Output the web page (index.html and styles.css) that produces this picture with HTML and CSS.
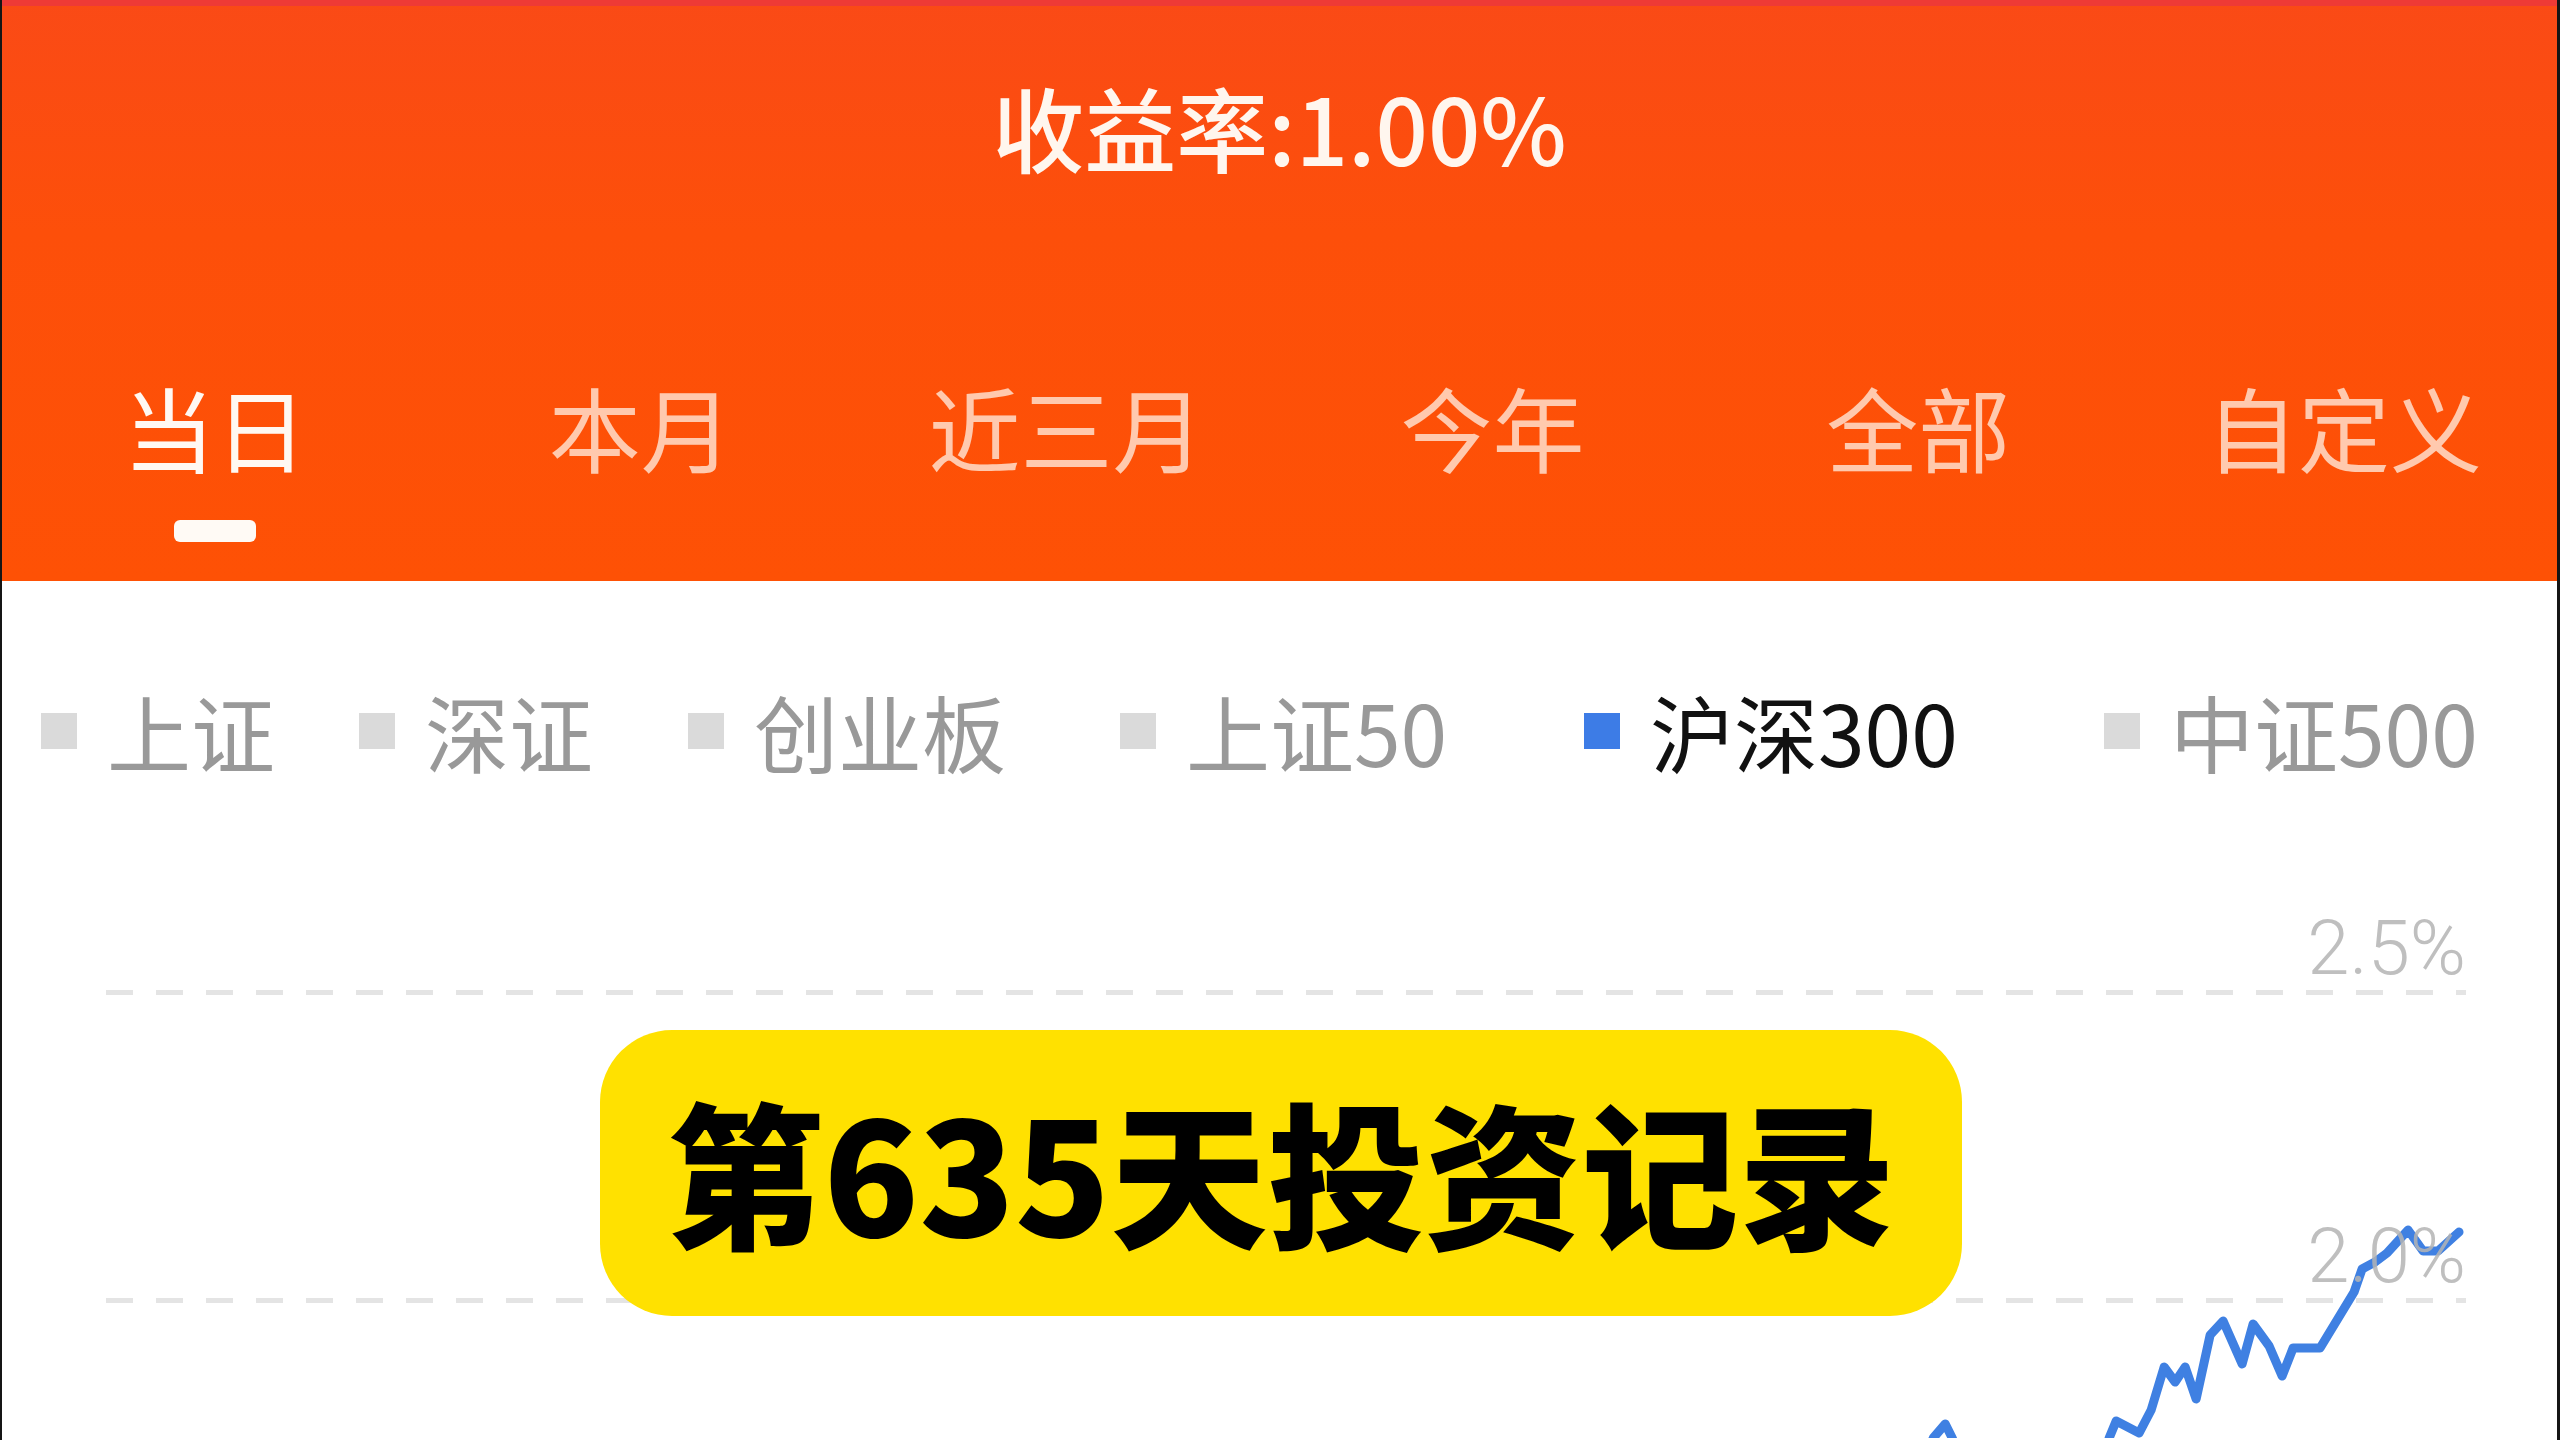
FILE: index.html
```html
<!DOCTYPE html>
<html lang="zh-CN">
<head>
<meta charset="utf-8">
<title>收益率</title>
<link rel="stylesheet" href="styles.css">
</head>
<body>
<div class="screen">
  <header class="header">
    <div class="strip"></div>
    <h1 class="title">收益率:1.00%</h1>
    <nav class="tabs">
      <div class="tab active">当日</div>
      <div class="tab">本月</div>
      <div class="tab">近三月</div>
      <div class="tab">今年</div>
      <div class="tab">全部</div>
      <div class="tab">自定义</div>
    </nav>
  </header>

  <section class="legend">
    <div class="legend-item"><span class="sq"></span><span class="lbl">上证</span></div>
    <div class="legend-item"><span class="sq"></span><span class="lbl">深证</span></div>
    <div class="legend-item"><span class="sq"></span><span class="lbl">创业板</span></div>
    <div class="legend-item"><span class="sq"></span><span class="lbl">上证50</span></div>
    <div class="legend-item on"><span class="sq"></span><span class="lbl">沪深300</span></div>
    <div class="legend-item"><span class="sq"></span><span class="lbl">中证500</span></div>
  </section>

  <section class="chart">
    <svg class="plot" viewBox="2 775 2556 665" preserveAspectRatio="none" aria-hidden="true">
      <polyline fill="none" stroke="#3f80e2" stroke-width="9" stroke-linejoin="round" stroke-linecap="round"
        points="1915,1490 1934,1440 1946,1426 1953,1440 1972,1490 2095,1490 2110,1440 2117,1423 2140,1435 2152,1412 2165,1369 2176,1384 2186,1369 2197,1401 2211,1337 2224,1323 2243,1366 2254,1326 2270,1348 2283,1378 2294,1350 2321,1350 2355,1294 2363,1271 2376,1264 2388,1255 2409,1232 2424,1253 2439,1253 2460,1234"/>
    </svg>
    <div class="grid">
      <div class="glabel">2.5%</div>
      <div class="gline"></div>
      <div class="glabel second">2.0%</div>
      <div class="gline"></div>
    </div>
  </section>

  <div class="badge">第635天投资记录</div>
</div>
</body>
</html>
```

FILE: styles.css
```css
html, body {
  margin: 0;
  padding: 0;
  background: #ffffff;
}

body {
  width: 2560px;
  height: 1440px;
  overflow: hidden;
  font-family: "Noto Sans CJK SC", "Noto Sans", sans-serif;
}

.screen {
  position: relative;
  width: 2560px;
  height: 1440px;
  box-sizing: border-box;
  border-left: 2px solid #151515;
  border-right: 3px solid #151515;
  overflow: hidden;
  background: #ffffff;
}

.header {
  background: linear-gradient(to bottom, #fa4a16 0%, #fd4f0a 40%, #fe5105 100%);
  padding-bottom: 39px;
}

.strip {
  height: 6px;
  background: #ee3a36;
}

.title {
  margin: 74px 0 0 0;
  font-size: 92px;
  line-height: 92px;
  font-weight: 500;
  color: #fff6ee;
  text-align: center;
  letter-spacing: 0;
}

.tabs {
  display: flex;
  margin-top: 208px;
}

.tab {
  flex: 1;
  display: flex;
  flex-direction: column;
  align-items: center;
  font-size: 92px;
  line-height: 92px;
  color: rgba(255, 236, 222, 0.78);
}

.tab::after {
  content: "";
  display: block;
  width: 82px;
  height: 22px;
  margin-top: 48px;
  border-radius: 6px;
  background: transparent;
}

.tab.active {
  color: #fff8f2;
}

.tab.active::after {
  background: #fffaf5;
}

.legend {
  display: grid;
  grid-template-columns: 318px 329px 432px 464px 520px auto;
  padding: 108px 0 0 39px;
}

.legend-item {
  display: flex;
  align-items: center;
  gap: 30px;
  height: 84px;
}

.sq {
  width: 36px;
  height: 36px;
  background: #dadada;
  flex: none;
}

.lbl {
  font-size: 84px;
  line-height: 84px;
  color: #999999;
  white-space: nowrap;
}

.legend-item.on .sq {
  background: #3d7ce6;
}

.legend-item.on .lbl {
  color: #111111;
}

.chart {
  position: relative;
  height: 665px;
  padding-top: 138px;
  box-sizing: border-box;
}

.plot {
  position: absolute;
  left: 0;
  top: 0;
  width: 100%;
  height: 100%;
}

.grid {
  position: relative;
  z-index: 1;
  margin: 0 91px 0 104px;
}

.glabel {
  font-family: Roboto, "Noto Sans", sans-serif;
  font-weight: 300;
  font-size: 76px;
  line-height: 75px;
  color: rgba(180, 180, 180, 0.85);
  text-align: right;
  margin-bottom: 4px;
}

.glabel.second {
  margin-top: 224px;
}

.gline {
  height: 5px;
  background: repeating-linear-gradient(to right, #e4e4e4 0, #e4e4e4 27px, transparent 27px, transparent 50px);
}

.badge {
  position: absolute;
  left: 598px;
  top: 1030px;
  width: 1362px;
  height: 286px;
  padding-bottom: 10px;
  box-sizing: border-box;
  border-radius: 72px;
  background: #ffe100;
  display: flex;
  align-items: center;
  justify-content: center;
  font-size: 157px;
  font-weight: 900;
  color: #000000;
  line-height: 1;
  letter-spacing: 0;
  z-index: 2;
}
```
